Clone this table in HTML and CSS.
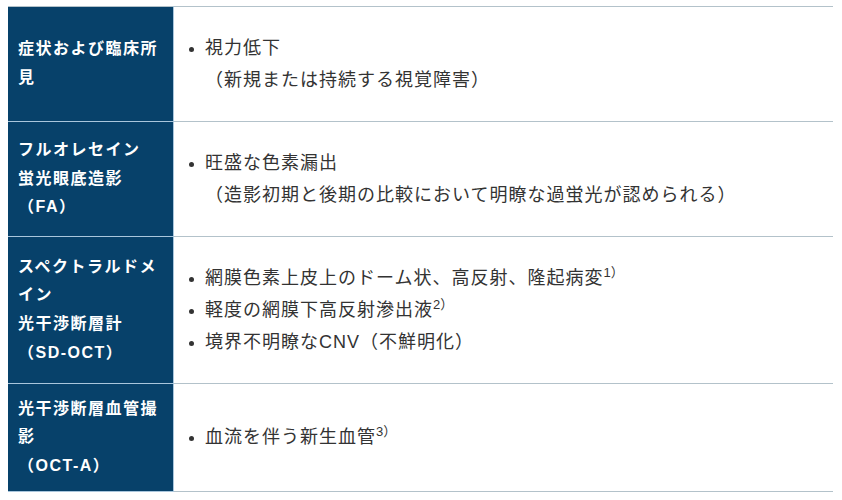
FILE: index.html
```html
<!DOCTYPE html>
<html lang="ja">
<head>
<meta charset="utf-8">
<link rel="stylesheet" href="styles.css">
</head>
<body>
<table class="findings">
  <tr>
    <th class="label">症状および臨床所見</th>
    <td class="detail">
      <ul>
        <li>視力低下<br>（新規または持続する視覚障害）</li>
      </ul>
    </td>
  </tr>
  <tr>
    <th class="label">フルオレセイン<br>蛍光眼底造影<br>（FA）</th>
    <td class="detail">
      <ul>
        <li>旺盛な色素漏出<br>（造影初期と後期の比較において明瞭な過蛍光が認められる）</li>
      </ul>
    </td>
  </tr>
  <tr>
    <th class="label">スペクトラルドメイン<br>光干渉断層計<br>（SD-OCT）</th>
    <td class="detail">
      <ul>
        <li>網膜色素上皮上のドーム状、高反射、隆起病変<sup>1）</sup></li>
        <li>軽度の網膜下高反射滲出液<sup>2）</sup></li>
        <li>境界不明瞭なCNV（不鮮明化）</li>
      </ul>
    </td>
  </tr>
  <tr>
    <th class="label">光干渉断層血管撮影<br>（OCT-A）</th>
    <td class="detail">
      <ul>
        <li>血流を伴う新生血管<sup>3）</sup></li>
      </ul>
    </td>
  </tr>
</table>
</body>
</html>
```
FILE: styles.css
```css
html, body {
  margin: 0;
  background: #ffffff;
}
body {
  padding: 6px 9px 0 8px;
  font-family: "Liberation Sans", "Noto Sans CJK JP", sans-serif;
}
.findings {
  width: 100%;
  border-collapse: collapse;
}
.findings tr {
  border-top: 1px solid #b3c2ca;
  border-bottom: 1px solid #b3c2ca;
}
.label {
  width: 145px;
  background: #07416a;
  color: #ffffff;
  font-size: 16px;
  font-weight: bold;
  letter-spacing: 1.5px;
  line-height: 28.6px;
  text-align: left;
  vertical-align: middle;
  padding: 10.5px 10px;
  border-right: 1px solid #a9c6dc;
  border-bottom: 1px solid #a9c6dc;
}
.detail {
  color: #333333;
  font-size: 18px;
  letter-spacing: 1px;
  line-height: 32px;
  vertical-align: middle;
  padding: 10.5px 10px;
}
.detail ul {
  margin: 14.5px 0;
  padding-left: 21px;
}
.detail li::marker {
  font-size: 15px;
}
.detail sup {
  font-size: 13px;
  line-height: 0;
  vertical-align: 7px;
  letter-spacing: 0;
}
```
